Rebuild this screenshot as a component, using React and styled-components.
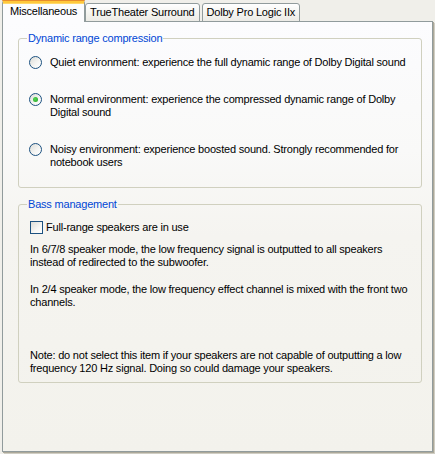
import React, { useState } from 'react';
import styled, { createGlobalStyle, css } from 'styled-components';

const GlobalStyle = createGlobalStyle`
  html, body {
    margin: 0;
    padding: 0;
    background: #ece9d8;
  }
  body {
    font-family: 'Liberation Sans', Arial, sans-serif;
    font-size: 11px;
    color: #000000;
  }
`;

const Dialog = styled.div`
  width: 435px;
  height: 454px;
  box-sizing: border-box;
  padding: 0 0 0 2px;
  background: #f0efea;
  display: flex;
  flex-direction: column;
  letter-spacing: -0.2px;
`;

const TabStrip = styled.div`
  display: flex;
  align-items: flex-end;
  height: 22px;
  position: relative;
  z-index: 1;
`;

const Tab = styled.button`
  font: inherit;
  letter-spacing: inherit;
  color: #000;
  box-sizing: border-box;
  border: 1px solid #919b9c;
  border-radius: 3px 3px 0 0;
  cursor: pointer;
  margin: 0 0 0 2px;
  padding: 0 4px 1px;
  height: 19px;
  background: linear-gradient(#ffffff, #f3f3ef 60%, #ecebe6);

  ${(p) =>
    p.$active &&
    css`
      margin: 0 -2px 0 0;
      height: 22px;
      padding: 0 7px 3px;
      border-top: 3px solid #ffc83c;
      border-bottom: none;
      background: #fcfcfe;
      box-shadow: inset 0 1px 0 #ffd86b;
      position: relative;
      &::before {
        content: '';
        position: absolute;
        left: -1px;
        right: -1px;
        top: -3px;
        height: 1px;
        background: #e68b2c;
        border-radius: 3px 3px 0 0;
      }
    `}
`;

const Panel = styled.div`
  margin-top: -1px;
  width: 431px;
  height: 431px;
  box-sizing: border-box;
  border: 1px solid #919b9c;
  box-shadow: 1px 1px 0 #aca899, 2px 2px 0 #d0cec3;
  background: linear-gradient(
    to bottom,
    #fcfcfe 0%,
    #f9f9f8 30%,
    #f5f4f0 50%,
    #f3f2ec 100%
  );
  padding: 10px 10px 0 15px;
`;

const Group = styled.fieldset`
  margin: 0 0 10px 0;
  width: 404px;
  box-sizing: border-box;
  border: 1px solid #d0d0bf;
  border-radius: 3px;
  padding: 0 10px ${(p) => p.$padBottom}px 11px;
`;

const Legend = styled.legend`
  color: #0046d5;
  padding: 0 1px;
  margin-left: -3px;
  line-height: 13px;
`;

const Options = styled.div`
  display: flex;
  flex-direction: column;
  gap: 24px;
  padding-top: 11px;
`;

const OptionRow = styled.label`
  display: flex;
  align-items: flex-start;
  gap: 8px;
  line-height: 13px;
  margin-left: -1px;
  cursor: default;
`;

const Radio = styled.span`
  flex: none;
  width: 13px;
  height: 13px;
  box-sizing: border-box;
  border: 1px solid #1c5180;
  border-radius: 50%;
  background: linear-gradient(135deg, #dcdcd7, #f6f6f4 60%, #ffffff);
  display: flex;
  align-items: center;
  justify-content: center;

  &::after {
    content: '';
    width: 5px;
    height: 5px;
    border-radius: 50%;
    background: ${(p) =>
      p.$checked ? 'radial-gradient(circle at 40% 40%, #55d755, #21a121)' : 'transparent'};
  }
`;

const OptionText = styled.span`
  width: 358px;
`;

const CheckRow = styled.label`
  display: flex;
  align-items: center;
  gap: 3px;
  line-height: 13px;
  margin-top: 10px;
`;

const Checkbox = styled.span`
  flex: none;
  width: 13px;
  height: 13px;
  box-sizing: border-box;
  border: 1px solid #1c5180;
  background: linear-gradient(135deg, #dcdcd7, #f6f6f4 60%, #ffffff);
  position: relative;

  ${(p) =>
    p.$checked &&
    css`
      &::after {
        content: '';
        position: absolute;
        left: 3px;
        top: 1px;
        width: 3px;
        height: 6px;
        border: solid #21a121;
        border-width: 0 2px 2px 0;
        transform: rotate(45deg);
      }
    `}
`;

const Paragraph = styled.p`
  margin: ${(p) => p.$top}px 0 0;
  line-height: 13px;
  width: 380px;
`;

const options = [
  'Quiet environment: experience the full dynamic range of Dolby Digital sound',
  'Normal environment: experience the compressed dynamic range of Dolby Digital sound',
  'Noisy environment: experience boosted sound. Strongly recommended for notebook users',
];

const tabs = ['Miscellaneous', 'TrueTheater Surround', 'Dolby Pro Logic IIx'];

export default function App() {
  const [tab, setTab] = useState(0);
  const [selected, setSelected] = useState(1);
  const [fullRange, setFullRange] = useState(false);

  return (
    <>
      <GlobalStyle />
      <Dialog>
        <TabStrip>
          {tabs.map((t, i) => (
            <Tab key={t} $active={i === tab} onClick={() => setTab(i)}>
              {t}
            </Tab>
          ))}
        </TabStrip>
        <Panel>
          <Group $padBottom={18}>
            <Legend>Dynamic range compression</Legend>
            <Options>
              {options.map((o, i) => (
                <OptionRow key={o} onClick={() => setSelected(i)}>
                  <Radio $checked={selected === i} />
                  <OptionText>{o}</OptionText>
                </OptionRow>
              ))}
            </Options>
          </Group>
          <Group $padBottom={7}>
            <Legend>Bass management</Legend>
            <CheckRow onClick={() => setFullRange(!fullRange)}>
              <Checkbox $checked={fullRange} />
              Full-range speakers are in use
            </CheckRow>
            <Paragraph $top={9}>
              In 6/7/8 speaker mode, the low frequency signal is outputted to all speakers instead
              of redirected to the subwoofer.
            </Paragraph>
            <Paragraph $top={14}>
              In 2/4 speaker mode, the low frequency effect channel is mixed with the front two
              channels.
            </Paragraph>
            <Paragraph $top={40}>
              Note: do not select this item if your speakers are not capable of outputting a low
              frequency 120 Hz signal. Doing so could damage your speakers.
            </Paragraph>
          </Group>
        </Panel>
      </Dialog>
    </>
  );
}
